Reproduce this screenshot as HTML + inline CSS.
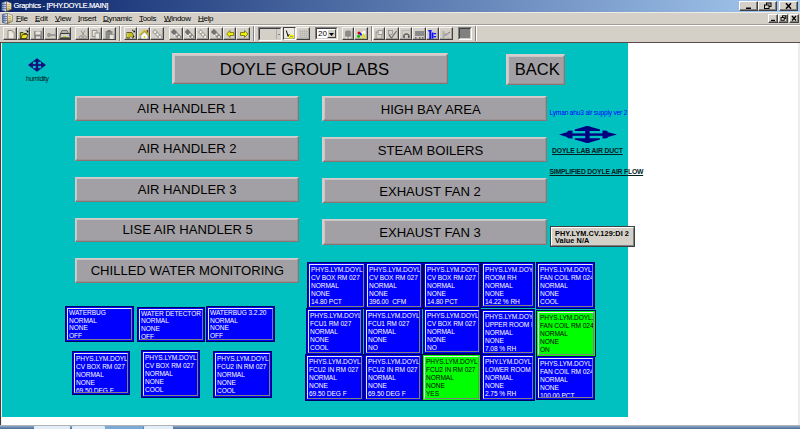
<!DOCTYPE html>
<html><head><meta charset="utf-8">
<style>
*{margin:0;padding:0;box-sizing:border-box}
html,body{width:800px;height:429px;overflow:hidden;background:#fff;font-family:"Liberation Sans",sans-serif}
.a{position:absolute}
#title{left:0;top:0;width:800px;height:12px;background:linear-gradient(90deg,#0a246a 0%,#a6caf0 100%)}
#menu{left:0;top:12px;width:800px;height:12px;background:#d4d0c8;border-top:1px solid #eeece6}
#tb{left:0;top:24px;width:800px;height:18px;background:#d4d0c8;border-top:1px solid #a09c94}#tb::after{content:"";position:absolute;left:0;top:0;width:800px;height:1px;background:#fff}
.tbt{position:absolute;top:27px;height:13px;border:1px solid;border-color:#f4f2ee #404040 #404040 #f4f2ee;background:#d4d0c8;box-shadow:inset -1px -1px 0 #a8a49c}.tbt svg{position:absolute;left:0;top:0}.tbt.pr{border-color:#404040 #fff #fff #404040;background:#eceae4}
.menuitem{position:absolute;top:13.5px;font-size:8px;line-height:10px;color:#000;letter-spacing:-0.3px}.menuitem u{text-decoration:none}.ul{position:absolute;top:21px;height:1px;background:#3a3a3a}
#client{left:0;top:42px;width:800px;height:384px;background:#fff;border-top:1px solid #5a4a48}
#cyan{left:2px;top:43px;width:626px;height:374px;background:#00c0c0}
.btn{position:absolute;background:#a2a0a4;border-style:solid;border-color:#d6cccc #8c7474 #8c7474 #d6cccc;color:#000;font-size:13px;white-space:nowrap}
.btn{box-shadow:inset -1px -1px 0 #9c9494, inset 1px 1px 0 #c8c6c6}.bt{position:absolute;width:300px;text-align:center;white-space:nowrap;color:#000}
.box{position:absolute;background:#0000ff;border:1px solid #000060;overflow:hidden;color:#fff}
.box .in{position:absolute;left:1px;top:1px;right:1px;bottom:1px;border:1px solid;border-color:#e8e8f0 #808080 #808080 #e8e8f0;overflow:hidden}
.box .t{position:absolute;left:1px;top:0.7px;font-size:6.6px;line-height:8px;letter-spacing:-0.08px;white-space:pre}
.g{background:#00ff00;color:#000}.wb{background:#d4d0c8;border:1px solid;border-color:#fff #404040 #404040 #fff;box-shadow:inset -1px -1px 0 #808080}.wb svg{position:absolute;left:0;top:0}
</style></head><body>
<div id="title" class="a"></div>
<svg class="a" style="left:1px;top:1px" width="11" height="11" viewBox="0 0 11 11"><defs><linearGradient id="bl1" x1="0" x2="1"><stop offset="0" stop-color="#5a78b8"/><stop offset="1" stop-color="#e8f0fc"/></linearGradient><linearGradient id="yl1" x1="0" y1="0" x2="0" y2="1"><stop offset="0" stop-color="#f4f0d8"/><stop offset="0.7" stop-color="#d8cc98"/><stop offset="1" stop-color="#8a6a20"/></linearGradient></defs><path d="M0.5 1.5L5.5 0.3V10.7L0.5 9.5Z" fill="url(#bl1)" stroke="#303850" stroke-width="0.5"/><path d="M5.5 0.3L10.5 2.3V8.3L5.5 10.7Z" fill="url(#yl1)" stroke="#504830" stroke-width="0.4"/><path d="M1 3.5h4M1 5.5h4M1 7.5h4" stroke="#3a4a7a" stroke-width="0.6"/><path d="M6.5 3.5h2.5M6.5 5.5h2.5M6.5 7.5h2.5" stroke="#c0a040" stroke-width="0.7"/></svg>
<div class="a" style="left:13.5px;top:1px;font-size:7.4px;line-height:9px;color:#fff;letter-spacing:-0.28px;text-shadow:0.2px 0 0 rgba(255,255,255,.6)">Graphics - [PHY.DOYLE.MAIN]</div>
<div class="a wb" style="left:739px;top:1px;width:19px;height:10px"><svg width="17" height="8"><rect x="6" y="5.5" width="5" height="1.5" fill="#000"/></svg></div>
<div class="a wb" style="left:758px;top:1px;width:19px;height:10px"><svg width="17" height="8"><rect x="7.5" y="1" width="4.5" height="3.5" fill="none" stroke="#000" stroke-width="1"/><rect x="5.5" y="3" width="4.5" height="3.5" fill="#d4d0c8" stroke="#000" stroke-width="1"/></svg></div>
<div class="a wb" style="left:779px;top:1px;width:19px;height:10px"><svg width="17" height="8"><path d="M6 1.2l5 5.6M11 1.2l-5 5.6" stroke="#000" stroke-width="1.5"/></svg></div>

<div id="menu" class="a"></div>
<svg class="a" style="left:2px;top:13px" width="11" height="11" viewBox="0 0 11 11"><defs><linearGradient id="bl13" x1="0" x2="1"><stop offset="0" stop-color="#5a78b8"/><stop offset="1" stop-color="#e8f0fc"/></linearGradient><linearGradient id="yl13" x1="0" y1="0" x2="0" y2="1"><stop offset="0" stop-color="#f4f0d8"/><stop offset="0.7" stop-color="#d8cc98"/><stop offset="1" stop-color="#8a6a20"/></linearGradient></defs><path d="M0.5 1.5L5.5 0.3V10.7L0.5 9.5Z" fill="url(#bl13)" stroke="#303850" stroke-width="0.5"/><path d="M5.5 0.3L10.5 2.3V8.3L5.5 10.7Z" fill="url(#yl13)" stroke="#504830" stroke-width="0.4"/><path d="M1 3.5h4M1 5.5h4M1 7.5h4" stroke="#3a4a7a" stroke-width="0.6"/><path d="M6.5 3.5h2.5M6.5 5.5h2.5M6.5 7.5h2.5" stroke="#c0a040" stroke-width="0.7"/></svg>
<div class="menuitem" style="left:16px"><u>F</u>ile</div>
<div class="menuitem" style="left:35px"><u>E</u>dit</div>
<div class="menuitem" style="left:55px"><u>V</u>iew</div>
<div class="menuitem" style="left:78px"><u>I</u>nsert</div>
<div class="menuitem" style="left:103px"><u>D</u>ynamic</div>
<div class="menuitem" style="left:139px"><u>T</u>ools</div>
<div class="menuitem" style="left:164px"><u>W</u>indow</div>
<div class="menuitem" style="left:198px"><u>H</u>elp</div>
<div class="ul" style="left:16px;width:5px"></div>
<div class="ul" style="left:35px;width:5px"></div>
<div class="ul" style="left:55px;width:5px"></div>
<div class="ul" style="left:78px;width:2px"></div>
<div class="ul" style="left:103px;width:6px"></div>
<div class="ul" style="left:139px;width:4px"></div>
<div class="ul" style="left:164px;width:7px"></div>
<div class="ul" style="left:198px;width:6px"></div>
<div class="a wb" style="left:768px;top:14px;width:10px;height:9px"><svg width="8" height="7"><rect x="2" y="4.8" width="4" height="1.2" fill="#000"/></svg></div>
<div class="a wb" style="left:778px;top:14px;width:10px;height:9px"><svg width="8" height="7"><rect x="3.5" y="0.8" width="3.2" height="2.6" fill="none" stroke="#000" stroke-width="0.9"/><rect x="2" y="2.5" width="3.2" height="2.8" fill="#d4d0c8" stroke="#000" stroke-width="0.9"/></svg></div>
<div class="a wb" style="left:789px;top:14px;width:10px;height:9px"><svg width="8" height="7"><path d="M2 1l4 4.5M6 1l-4 4.5" stroke="#000" stroke-width="1.2"/></svg></div>

<div id="tb" class="a"></div>
<!-- tbstart -->
<div class="tbt" style="left:3px;width:14px"><svg width="12" height="11" viewBox="0 0 12 11" preserveAspectRatio="none"><path d="M4 2.5h4l2 2v6.5h-6z" fill="none" stroke="#8c8a86" stroke-width="1"/><path d="M4.8 3.3h3v1.8h1.7v5.1h-4.7z" fill="#eeeae2"/></svg></div>
<div class="tbt" style="left:17px;width:13px"><svg width="11" height="11" viewBox="0 0 12 11" preserveAspectRatio="none"><path d="M2.5 4.5h3l1 1h3v5h-7z" fill="#c8c020" stroke="#202000" stroke-width="0.8"/><path d="M3 10.5l2-4h6l-2 4z" fill="#e8e030" stroke="#202000" stroke-width="0.7"/><circle cx="10.5" cy="3.5" r="0.9" fill="#000"/><circle cx="9" cy="2.3" r="0.6" fill="#222"/></svg></div>
<div class="tbt" style="left:30px;width:14px"><svg width="12" height="11" viewBox="0 0 12 11" preserveAspectRatio="none"><rect x="3" y="3" width="8" height="8" fill="#8c8a86"/><rect x="4.5" y="3.5" width="5" height="3" fill="#e8e6e0"/><rect x="5" y="8.5" width="4" height="2" fill="#e8e6e0"/></svg></div>
<div class="tbt" style="left:44px;width:13px"><svg width="11" height="11" viewBox="0 0 12 11" preserveAspectRatio="none"><circle cx="4.3" cy="7" r="2" fill="#8c8a86"/><rect x="5.5" y="6.3" width="6" height="1.5" fill="#8c8a86"/><circle cx="4.3" cy="7" r="0.6" fill="#e8e6e0"/></svg></div>
<div class="tbt" style="left:57px;width:14px"><svg width="12" height="11" viewBox="0 0 12 11" preserveAspectRatio="none"><path d="M4 2.5h5l1.5 3h-8z" fill="#b0b0b0" stroke="#404040" stroke-width="0.6"/><path d="M2.5 5.5h9l0.5 2.5v2.5h-10v-2.5z" fill="#d0d0d0" stroke="#202020" stroke-width="0.8"/><rect x="5" y="8" width="3" height="1.3" fill="#d8d000"/><path d="M3 9.5h8" stroke="#303030" stroke-width="0.6"/></svg></div>
<div class="tbt" style="left:75px;width:14px"><svg width="12" height="11" viewBox="0 0 12 11" preserveAspectRatio="none"><path d="M5 2.5l3 5M9 2.5l-3 5" stroke="#8c8a86" stroke-width="0.9" fill="none"/><circle cx="5" cy="9.3" r="1.5" fill="none" stroke="#8c8a86" stroke-width="0.9"/><circle cx="8.8" cy="9.3" r="1.5" fill="none" stroke="#8c8a86" stroke-width="0.9"/></svg></div>
<div class="tbt" style="left:89px;width:13px"><svg width="11" height="11" viewBox="0 0 12 11" preserveAspectRatio="none"><rect x="2.5" y="2.5" width="5" height="6" fill="#e8e6e0" stroke="#8c8a86" stroke-width="0.9"/><rect x="5.5" y="5" width="5" height="6" fill="#e8e6e0" stroke="#8c8a86" stroke-width="0.9"/></svg></div>
<div class="tbt" style="left:102px;width:14px"><svg width="12" height="11" viewBox="0 0 12 11" preserveAspectRatio="none"><rect x="2.5" y="3" width="7" height="8" fill="#8c8a86"/><rect x="4.5" y="2" width="3" height="2" fill="#707070"/><rect x="6.5" y="6.5" width="4.5" height="5" fill="#e8e6e0" stroke="#8c8a86" stroke-width="0.7"/></svg></div>
<div class="tbt" style="left:124px;width:13px"><svg width="11" height="11" viewBox="0 0 12 11" preserveAspectRatio="none"><path d="M2 4.5h5.5l1.5 2v3.5h-7z" fill="#c8c020" stroke="#303000" stroke-width="0.7"/><path d="M2.5 5v4" stroke="#f0f080" stroke-width="0.8"/><circle cx="10" cy="3.5" r="0.9" fill="#000"/><circle cx="8.5" cy="2.3" r="0.7" fill="#222"/><circle cx="6.5" cy="10" r="1.4" fill="#f0f0f0" stroke="#404040" stroke-width="0.5"/><circle cx="9.5" cy="8.5" r="0.7" fill="#101010"/></svg></div>
<div class="tbt" style="left:137px;width:13px"><svg width="11" height="11" viewBox="0 0 12 11" preserveAspectRatio="none"><path d="M1.5 7.5l5.5-5 5.5 5" fill="none" stroke="#c8c000" stroke-width="1.5"/><path d="M3 7.5l4-3.5 4 3.5v3.5h-8z" fill="#fff" stroke="#404040" stroke-width="0.5"/><circle cx="7" cy="9" r="1" fill="#d8d000"/><rect x="9.5" y="2" width="1.3" height="2.5" fill="#a01010"/></svg></div>
<div class="tbt" style="left:150px;width:14px"><svg width="12" height="11" viewBox="0 0 12 11" preserveAspectRatio="none"><path d="M2.5 2.5l8 8" stroke="#a8a6a0" stroke-width="4"/><circle cx="4" cy="4" r="1.1" fill="#fff"/><circle cx="6.5" cy="6.5" r="1.1" fill="#fff"/><circle cx="9" cy="9" r="1.1" fill="#fff"/></svg></div>
<div class="tbt" style="left:169px;width:14px"><svg width="12" height="11" viewBox="0 0 12 11" preserveAspectRatio="none"><path d="M2.5 2.5l8 8" stroke="#8c8a86" stroke-width="4"/><path d="M2.5 2.5l3 3" stroke="#707070" stroke-width="4"/><circle cx="6.5" cy="6.5" r="1.1" fill="#f0f0f0"/><circle cx="9" cy="9" r="1.1" fill="#f0f0f0"/><circle cx="4.5" cy="7.5" r="0.8" fill="#fff"/></svg></div>
<div class="tbt" style="left:183px;width:13px"><svg width="11" height="11" viewBox="0 0 12 11" preserveAspectRatio="none"><path d="M2.5 2.5l8 8" stroke="#8c8a86" stroke-width="4"/><path d="M2.5 2.5l3 3" stroke="#707070" stroke-width="4"/><circle cx="6.5" cy="6.5" r="1.1" fill="#f0f0f0"/><circle cx="9" cy="9" r="1.1" fill="#f0f0f0"/><circle cx="4.5" cy="7.5" r="0.8" fill="#fff"/></svg></div>
<div class="tbt" style="left:196px;width:13px"><svg width="11" height="11" viewBox="0 0 12 11" preserveAspectRatio="none"><path d="M2.5 2.5l8 8" stroke="#a8a6a0" stroke-width="4"/><circle cx="4" cy="4" r="1.1" fill="#fff"/><circle cx="6.5" cy="6.5" r="1.1" fill="#fff"/><circle cx="9" cy="9" r="1.1" fill="#fff"/></svg></div>
<div class="tbt" style="left:209px;width:14px"><svg width="12" height="11" viewBox="0 0 12 11" preserveAspectRatio="none"><path d="M2.5 2.5l8 8" stroke="#8c8a86" stroke-width="4"/><path d="M2.5 2.5l3 3" stroke="#707070" stroke-width="4"/><circle cx="6.5" cy="6.5" r="1.1" fill="#f0f0f0"/><circle cx="9" cy="9" r="1.1" fill="#f0f0f0"/><circle cx="4.5" cy="7.5" r="0.8" fill="#fff"/></svg></div>
<div class="tbt" style="left:223px;width:13px"><svg width="11" height="11" viewBox="0 0 12 11" preserveAspectRatio="none"><path d="M3 6l3.5-3.5v2h4v3h-4v2z" fill="#f0f000" stroke="#404000" stroke-width="0.6"/></svg></div>
<div class="tbt" style="left:236px;width:14px"><svg width="12" height="11" viewBox="0 0 12 11" preserveAspectRatio="none"><path d="M11 6l-3.5-3.5v2h-4v3h4v2z" fill="#f0f000" stroke="#404000" stroke-width="0.6"/></svg></div>
<div class="tbt pr" style="left:283px;width:13px"><svg width="11" height="11" viewBox="0 0 12 11" preserveAspectRatio="none"><path d="M2.5 2.5l2 6 1-2 2 2" fill="none" stroke="#000" stroke-width="1"/><ellipse cx="8" cy="8.5" rx="3" ry="2" fill="#f0f000"/><rect x="6.5" y="8" width="3" height="0.8" fill="#8080c0"/></svg></div>
<div class="tbt" style="left:296px;width:14px"><svg width="12" height="11" viewBox="0 0 12 11" preserveAspectRatio="none"><path d="M2 3.5h10M2 5.5h10M2 7.5h10M2 9.5h10M3.5 2v10M5.5 2v10M7.5 2v10M9.5 2v10" stroke="#b8b6b0" stroke-width="0.8"/></svg></div>
<div class="tbt" style="left:342px;width:12px"><svg width="10" height="11" viewBox="0 0 12 11" preserveAspectRatio="none"><rect x="2.5" y="2.5" width="7" height="7" rx="2" fill="#8c8a86"/><circle cx="4" cy="9.5" r="1" fill="#e8e6e0"/><circle cx="8" cy="9.5" r="1" fill="#e8e6e0"/><rect x="10.5" y="3" width="0.8" height="7" fill="#8c8a86"/></svg></div>
<div class="tbt" style="left:354px;width:14px"><svg width="12" height="11" viewBox="0 0 12 11" preserveAspectRatio="none"><circle cx="4" cy="5" r="1.5" fill="#e00000"/><circle cx="6" cy="6" r="1.5" fill="#0020e0"/><circle cx="3.5" cy="8.3" r="1.5" fill="#00c000"/><path d="M6 4.5l4-2 0.5 3-3 2z" fill="#fff"/><path d="M6.5 11l2-5 2 5" fill="none" stroke="#e0e000" stroke-width="1.2"/></svg></div>
<div class="tbt" style="left:373px;width:12px"><svg width="10" height="11" viewBox="0 0 12 11" preserveAspectRatio="none"><rect x="2.5" y="4" width="7" height="7" fill="none" stroke="#8c8a86" stroke-width="1"/><rect x="5" y="2.5" width="5" height="4" fill="#e8e6e0" stroke="#8c8a86" stroke-width="0.8"/></svg></div>
<div class="tbt" style="left:385px;width:14px"><svg width="12" height="11" viewBox="0 0 12 11" preserveAspectRatio="none"><rect x="2.5" y="2.5" width="4" height="4" fill="none" stroke="#8c8a86" stroke-width="0.7"/><path d="M3 7l2.5 3 5-7" fill="none" stroke="#707070" stroke-width="1.2"/></svg></div>
<div class="tbt" style="left:399px;width:13px"><svg width="11" height="11" viewBox="0 0 12 11" preserveAspectRatio="none"><rect x="2.5" y="2.5" width="9" height="8" fill="none" stroke="#b0aea8" stroke-width="0.8"/><path d="M4 9a3 3 0 0 1 6 0" fill="none" stroke="#606060" stroke-width="1.3"/><circle cx="4.5" cy="9" r="1" fill="#505050"/><circle cx="9.5" cy="9" r="1" fill="#505050"/></svg></div>
<div class="tbt" style="left:412px;width:14px"><svg width="12" height="11" viewBox="0 0 12 11" preserveAspectRatio="none"><rect x="2" y="3" width="9" height="5" fill="#8a8a8a"/><rect x="2" y="9" width="1.5" height="1.5" fill="#707070"/><rect x="6" y="9" width="1.5" height="1.5" fill="#606060"/><rect x="9" y="9" width="1.5" height="1.5" fill="#606060"/></svg></div>
<div class="tbt" style="left:426px;width:13px"><svg width="11" height="11" viewBox="0 0 12 11" preserveAspectRatio="none"><rect x="2.5" y="2" width="2" height="9" fill="#1010ff"/><rect x="1.5" y="2" width="3.5" height="1.5" fill="#1010ff"/><rect x="5" y="4.5" width="2" height="6" fill="#1010ff"/><rect x="7" y="5" width="3" height="1.3" fill="#1010ff"/><rect x="7" y="8" width="3" height="1.3" fill="#1010ff"/></svg></div>
<div class="tbt" style="left:439px;width:14px"><svg width="12" height="11" viewBox="0 0 12 11" preserveAspectRatio="none"><rect x="2.5" y="3" width="2" height="8" fill="#b0aea8"/><path d="M4 8l3 -2 3 -2" stroke="#8c8a86" stroke-width="1.2" fill="none"/><rect x="4" y="5.5" width="4" height="5" fill="none" stroke="#b0aea8" stroke-width="0.8"/></svg></div>
<div class="a" style="left:119px;top:26px;width:1px;height:15px;background:#808080"></div><div class="a" style="left:120px;top:26px;width:1px;height:15px;background:#fff"></div>
<div class="a" style="left:253px;top:26px;width:1px;height:15px;background:#808080"></div><div class="a" style="left:254px;top:26px;width:1px;height:15px;background:#fff"></div>
<div class="a" style="left:371px;top:26px;width:1px;height:15px;background:#808080"></div><div class="a" style="left:372px;top:26px;width:1px;height:15px;background:#fff"></div>
<div class="a" style="left:475px;top:26px;width:1px;height:15px;background:#808080"></div><div class="a" style="left:476px;top:26px;width:1px;height:15px;background:#fff"></div>
<div class="a" style="left:258px;top:27px;width:24px;height:14px;background:#d4d0c8;border:1px solid;border-color:#808080 #fff #fff #808080"></div>
<div class="a" style="left:259px;top:28px;width:22px;height:12px;border:1px solid;border-color:#404040 #d4d0c8 #d4d0c8 #404040"></div>
<div class="a" style="left:276px;top:29px;width:5px;height:10px;border-left:1px solid #b0aca4"></div><div class="a" style="left:278px;top:34px;width:2px;height:1px;background:#808080"></div>
<div class="a" style="left:315px;top:27px;width:23px;height:13px;background:#fff;border:1px solid;border-color:#808080 #fff #fff #808080"></div>
<div class="a" style="left:316px;top:28px;width:21px;height:11px;border:1px solid;border-color:#404040 #d4d0c8 #d4d0c8 #404040"></div>
<div class="a" style="left:318px;top:29px;font-size:8px;line-height:9px;color:#000">20</div>
<div class="a" style="left:327px;top:29px;width:9px;height:9px;background:#d4d0c8;border:1px solid;border-color:#fff #404040 #404040 #fff"></div><svg class="a" style="left:329px;top:33px" width="5" height="3"><path d="M0 0h5l-2.5 3z" fill="#000"/></svg>
<div class="a" style="left:458px;top:27px;width:14px;height:13px;background:#fff;border:1px solid;border-color:#808080 #fff #fff #808080"></div>
<div class="a" style="left:459px;top:28px;width:12px;height:11px;background:#808080;border:1px solid;border-color:#404040 #d4d0c8 #d4d0c8 #404040"></div>
<!-- tbend -->

<div id="client" class="a"></div>
<div class="a" style="left:0;top:42px;width:1px;height:384px;background:#404040"></div>
<div id="cyan" class="a"></div>
<div class="a" style="left:798px;top:43px;width:2px;height:382px;background:#ececea"></div>
<div class="a" style="left:1px;top:43px;width:1px;height:382px;background:#f4eeee"></div>
<div class="a" style="left:0;top:425px;width:800px;height:1px;background:#b0b4b8"></div>
<div class="a" style="left:0;top:426px;width:800px;height:3px;background:linear-gradient(180deg,#8aa8c8,#4a6a90)"></div>
<div class="a" style="left:34px;top:426px;width:36px;height:3px;background:#e4eef8;border-radius:1px 1px 0 0"></div>
<div class="a" style="left:72px;top:426px;width:33px;height:3px;background:#e4eef8;border-radius:1px 1px 0 0"></div>
<div class="a" style="left:105px;top:426px;width:38px;height:3px;background:#7aaad4"></div>
<div class="a" style="left:144px;top:426px;width:29px;height:3px;background:#e4eef8;border-radius:1px 1px 0 0"></div>

<!-- big buttons -->
<div class="btn" style="left:172px;top:53px;width:276px;height:31px;border-width:2px 1px 1px 2px"></div>
<div class="bt" style="left:154.55px;top:61.76px;font-size:16.7px;line-height:16.7px">DOYLE GROUP LABS</div>
<div class="btn" style="left:506px;top:54px;width:59px;height:31px;border-width:2px 1px 1px 2px"></div>
<div class="bt" style="left:387.30px;top:61.43px;font-size:16.5px;line-height:16.5px">BACK</div>
<div class="btn" style="left:75px;top:96px;width:224px;height:25px;border-width:1px 1px 1px 1px"></div>
<div class="bt" style="left:36.85px;top:101.91px;font-size:13.1px;line-height:13.1px">AIR HANDLER 1</div>
<div class="btn" style="left:75px;top:136px;width:224px;height:25px;border-width:1px 1px 1px 1px"></div>
<div class="bt" style="left:37.15px;top:142.41px;font-size:13.1px;line-height:13.1px">AIR HANDLER 2</div>
<div class="btn" style="left:75px;top:177px;width:224px;height:25px;border-width:1px 1px 1px 1px"></div>
<div class="bt" style="left:37.15px;top:182.61px;font-size:13.1px;line-height:13.1px">AIR HANDLER 3</div>
<div class="btn" style="left:75px;top:218px;width:224px;height:24px;border-width:1px 1px 1px 1px"></div>
<div class="bt" style="left:37.70px;top:223.41px;font-size:13.1px;line-height:13.1px">LISE AIR HANDLER 5</div>
<div class="btn" style="left:75px;top:258px;width:224px;height:25px;border-width:1px 1px 1px 1px"></div>
<div class="bt" style="left:37.30px;top:264.21px;font-size:13.1px;line-height:13.1px">CHILLED WATER MONITORING</div>
<div class="btn" style="left:322px;top:96px;width:225px;height:25px;border-width:1px 1px 1px 2px"></div>
<div class="bt" style="left:280.73px;top:102.71px;font-size:13.1px;line-height:13.1px">HIGH BAY AREA</div>
<div class="btn" style="left:322px;top:137px;width:225px;height:25px;border-width:1px 1px 1px 2px"></div>
<div class="bt" style="left:280.55px;top:143.51px;font-size:13.1px;line-height:13.1px">STEAM BOILERS</div>
<div class="btn" style="left:322px;top:178px;width:225px;height:25px;border-width:1px 1px 1px 2px"></div>
<div class="bt" style="left:280.00px;top:184.71px;font-size:13.1px;line-height:13.1px">EXHAUST FAN 2</div>
<div class="btn" style="left:322px;top:219px;width:225px;height:26px;border-width:1px 1px 1px 2px"></div>
<div class="bt" style="left:280.00px;top:225.51px;font-size:13.1px;line-height:13.1px">EXHAUST FAN 3</div>
<!-- humidity icon -->
<svg class="a" style="left:27px;top:57px" width="20" height="16" viewBox="0 0 20 16">
<path d="M1 8 L10 1.3 L19 8 L10 14.7 Z" fill="#12127e"/>
<g fill="#00c0c0"><rect x="6" y="4.8" width="2.8" height="2.3"/><rect x="11.2" y="4.8" width="2.8" height="2.3"/><rect x="6" y="8.9" width="2.8" height="2.3"/><rect x="11.2" y="8.9" width="2.8" height="2.3"/></g>
</svg>
<div class="a" style="left:26px;top:75px;font-size:6.9px;line-height:7px;color:#002020;letter-spacing:-0.38px">humidity</div>
<div class="a" style="left:549.5px;top:108.5px;font-size:6.6px;line-height:8px;color:#0000ff;white-space:nowrap;letter-spacing:-0.18px">Lyman ahu3 air supply ver 2</div>
<!-- duct icon -->
<svg class="a" style="left:556px;top:123px" width="64" height="23" viewBox="0 0 64 23">
<g fill="#000080">
<path d="M3 11.6 L11 9.3 L12 7.8 L16.5 7.6 L16.5 15.4 L12 15.2 L11 13.9 Z"/>
<rect x="16" y="10.4" width="31" height="2.4"/>
<path d="M46.5 7.6 L51 7.8 L52 9.3 L61 11.6 L52 13.9 L51 15.2 L46.5 15.4 Z"/>
<path d="M18.8 7.9 L18.8 6.6 L29.2 3.6 L33.6 3.6 L44 6.6 L44 7.9 Z"/>
<path d="M18.8 15.3 L44 15.3 L44 16.6 L33.6 19.6 L29.2 19.6 L18.8 16.6 Z"/>
<rect x="29.2" y="3.2" width="4.4" height="16.6"/>
</g>
</svg>
<div class="a" style="left:552px;top:147px;font-size:6.8px;line-height:8px;color:#002020;font-weight:bold;text-decoration:underline;white-space:nowrap;letter-spacing:-0.15px">DOYLE LAB AIR DUCT</div>
<div class="a" style="left:549.5px;top:168px;font-size:6.8px;line-height:8px;color:#002020;font-weight:bold;text-decoration:underline;white-space:nowrap;letter-spacing:-0.2px">SIMPLIFIED DOYLE AIR FLOW</div>
<!-- tooltip -->
<div class="a" style="left:550px;top:226px;width:85px;height:21px;background:#d4d0c8;border:1px solid #404040"></div>
<div class="a" style="left:551px;top:227px;width:83px;height:19px;border:1px solid;border-color:#fff #808080 #808080 #fff"></div>
<div class="a" style="left:555px;top:229.5px;font-size:7.3px;line-height:7.3px;font-weight:bold;color:#000;white-space:pre;letter-spacing:0.08px">PHY.LYM.CV.129:DI 2<br>Value N/A</div>
<!-- boxes -->
<div class="box" style="left:307px;top:262px;width:59px;height:47px"><div class="in"><div class="t" style="line-height:8px">PHYS.LYM.DOYL.<br>CV BOX RM 027<br>NORMAL<br>NONE<br>14.80 PCT</div></div></div>
<div class="box" style="left:365px;top:262px;width:58px;height:47px"><div class="in"><div class="t" style="line-height:8px">PHYS.LYM.DOYL.<br>CV BOX RM 027<br>NORMAL<br>NONE<br>396.00  CFM</div></div></div>
<div class="box" style="left:423px;top:262px;width:58px;height:47px"><div class="in"><div class="t" style="line-height:8px">PHYS.LYM.DOYL.<br>CV BOX RM 027<br>NORMAL<br>NONE<br>14.80 PCT</div></div></div>
<div class="box" style="left:481px;top:262px;width:54px;height:46px"><div class="in"><div class="t" style="line-height:8px">PHYS.LYM.DOYL.<br>ROOM RH<br>NORMAL<br>NONE<br>14.22 % RH</div></div></div>
<div class="box" style="left:536px;top:262px;width:59px;height:47px"><div class="in"><div class="t" style="line-height:8px">PHYS.LYM.DOYL.<br>FAN COIL RM 024<br>NORMAL<br>NONE<br>COOL</div></div></div>
<div class="box" style="left:306px;top:308px;width:57px;height:47px"><div class="in"><div class="t" style="line-height:8px">PHYS.LYM.DOYL.<br>FCU1 RM 027<br>NORMAL<br>NONE<br>COOL</div></div></div>
<div class="box" style="left:364px;top:308px;width:58px;height:47px"><div class="in"><div class="t" style="line-height:8px">PHYS.LYM.DOYL.<br>FCU1 RM 027<br>NORMAL<br>NONE<br>NO</div></div></div>
<div class="box" style="left:423px;top:308px;width:58px;height:46px"><div class="in"><div class="t" style="line-height:8px">PHYS.LYM.DOYL.<br>CV BOX RM 027<br>NORMAL<br>NONE<br>NO</div></div></div>
<div class="box" style="left:481px;top:309px;width:54px;height:46px"><div class="in"><div class="t" style="line-height:8px">PHYS.LYM.DOYL.<br>UPPER ROOM RH<br>NORMAL<br>NONE<br>7.08 % RH</div></div></div>
<div class="box g" style="left:536px;top:310px;width:60px;height:47px"><div class="in"><div class="t" style="line-height:8px">PHYS.LYM.DOYL.<br>FAN COIL RM 024<br>NORMAL<br>NONE<br>ON</div></div></div>
<div class="box" style="left:305px;top:354px;width:59px;height:47px"><div class="in"><div class="t" style="line-height:8px">PHYS.LYM.DOYL.<br>FCU2 IN RM 027<br>NORMAL<br>NONE<br>69.50 DEG F</div></div></div>
<div class="box" style="left:364px;top:354px;width:58px;height:47px"><div class="in"><div class="t" style="line-height:8px">PHYS.LYM.DOYL.<br>FCU2 IN RM 027<br>NORMAL<br>NONE<br>69.50 DEG F</div></div></div>
<div class="box g" style="left:422px;top:354px;width:59px;height:47px"><div class="in"><div class="t" style="line-height:8px">PHYS.LYM.DOYL.<br>FCU2 IN RM 027<br>NORMAL<br>NONE<br>YES</div></div></div>
<div class="box" style="left:481px;top:354px;width:54px;height:47px"><div class="in"><div class="t" style="line-height:8px">PHY.LYM.DOYL<br>LOWER ROOM RH<br>NORMAL<br>NONE<br>2.75 % RH</div></div></div>
<div class="box" style="left:536px;top:356px;width:59px;height:44px"><div class="in"><div class="t" style="line-height:8px">PHYS.LYM.DOYL.<br>FAN COIL RM 024<br>NORMAL<br>NONE<br>100.00 PCT</div></div></div>
<div class="box" style="left:65px;top:306px;width:69px;height:36px"><div class="in"><div class="t" style="line-height:7.6px;top:0px">WATERBUG<br>NORMAL<br>NONE<br>OFF</div></div></div>
<div class="box" style="left:137px;top:307px;width:68px;height:35px"><div class="in"><div class="t" style="line-height:7.6px;top:-0.2px">WATER DETECTOR<br>NORMAL<br>NONE<br>OFF</div></div></div>
<div class="box" style="left:206px;top:306px;width:69px;height:36px"><div class="in"><div class="t" style="line-height:7.6px;top:0px">WATERBUG 3.2.20<br>NORMAL<br>NONE<br>OFF</div></div></div>
<div class="box" style="left:72px;top:351px;width:58px;height:44px"><div class="in"><div class="t" style="line-height:8px">PHYS.LYM.DOYL.<br>CV BOX RM 027<br>NORMAL<br>NONE<br>69.50 DEG F</div></div></div>
<div class="box" style="left:141px;top:350px;width:59px;height:48px"><div class="in"><div class="t" style="line-height:8px">PHYS.LYM.DOYL.<br>CV BOX RM 027<br>NORMAL<br>NONE<br>COOL</div></div></div>
<div class="box" style="left:213px;top:351px;width:59px;height:47px"><div class="in"><div class="t" style="line-height:8px">PHYS.LYM.DOYL.<br>FCU2 IN RM 027<br>NORMAL<br>NONE<br>COOL</div></div></div>
</body></html>
